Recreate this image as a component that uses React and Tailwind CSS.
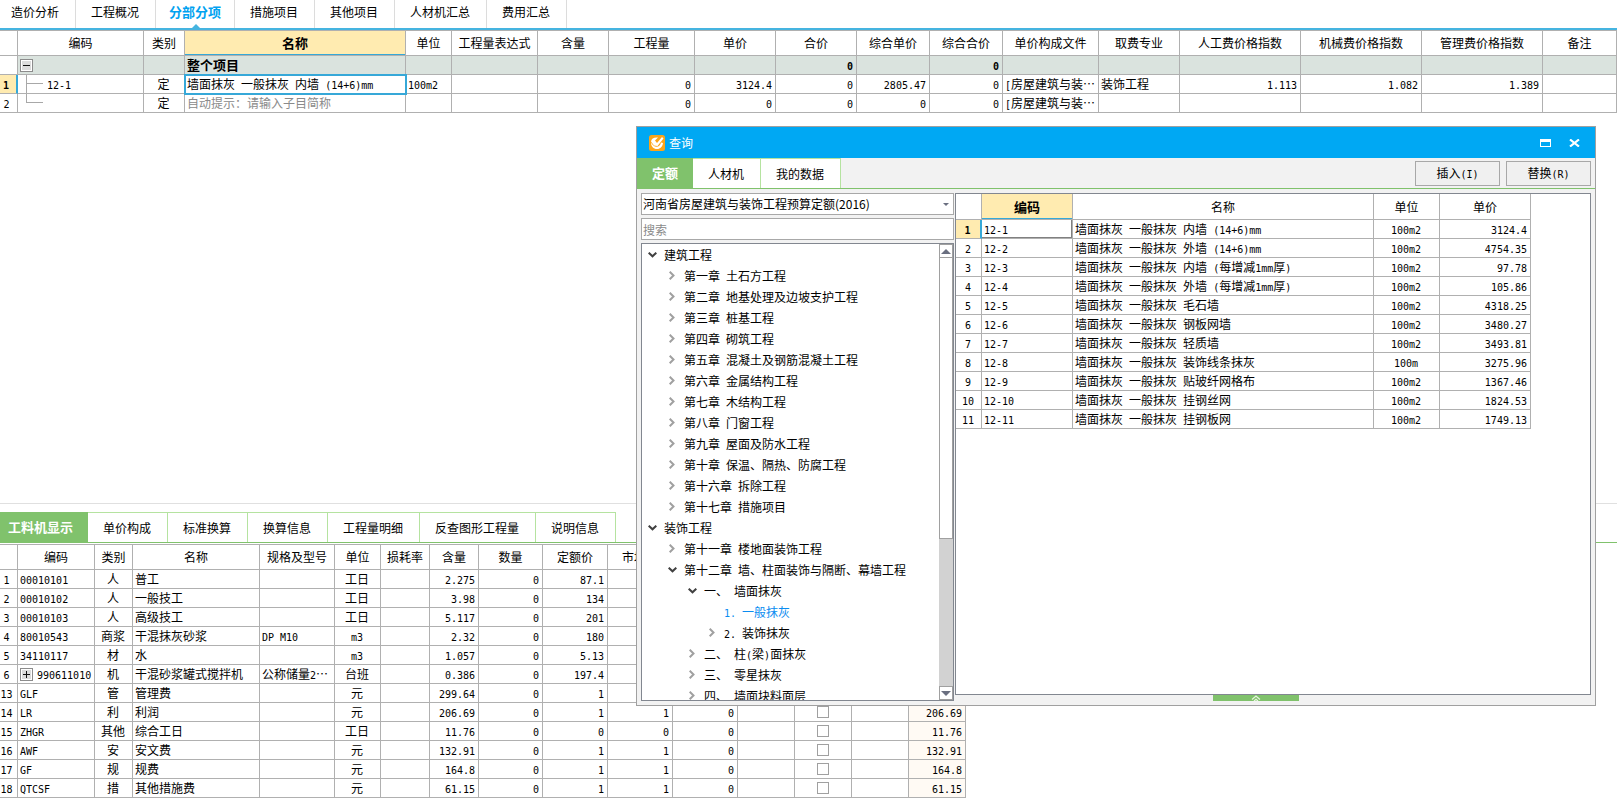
import { Fragment, useState } from "react";

const mainTabs = ["造价分析", "工程概况", "分部分项", "措施项目", "其他项目", "人材机汇总", "费用汇总"];
const detailTabs = ["工料机显示", "单价构成", "标准换算", "换算信息", "工程量明细", "反查图形工程量", "说明信息"];
const queryTabs = ["定额", "人材机", "我的数据"];

const itemCols = [
  { w: "w-[18px]", label: "" },
  { w: "w-[126px]", label: "编码" },
  { w: "w-[41px]", label: "类别" },
  { w: "w-[221px]", label: "名称" },
  { w: "w-[46px]", label: "单位" },
  { w: "w-[86px]", label: "工程量表达式" },
  { w: "w-[71px]", label: "含量" },
  { w: "w-[86px]", label: "工程量" },
  { w: "w-[81px]", label: "单价" },
  { w: "w-[81px]", label: "合价" },
  { w: "w-[73px]", label: "综合单价" },
  { w: "w-[73px]", label: "综合合价" },
  { w: "w-[96px]", label: "单价构成文件" },
  { w: "w-[81px]", label: "取费专业" },
  { w: "w-[121px]", label: "人工费价格指数" },
  { w: "w-[121px]", label: "机械费价格指数" },
  { w: "w-[121px]", label: "管理费价格指数" },
  { w: "", label: "备注" },
];

const detailCols = [
  { w: "w-[18px]", label: "" },
  { w: "w-[77px]", label: "编码" },
  { w: "w-[38px]", label: "类别" },
  { w: "w-[127px]", label: "名称" },
  { w: "w-[75px]", label: "规格及型号" },
  { w: "w-[46px]", label: "单位" },
  { w: "w-[49px]", label: "损耗率" },
  { w: "w-[49px]", label: "含量" },
  { w: "w-[64px]", label: "数量" },
  { w: "w-[65px]", label: "定额价" },
  { w: "w-[65px]", label: "市场价" },
  { w: "w-[65px]", label: "" },
  { w: "w-[57px]", label: "" },
  { w: "w-[57px]", label: "" },
  { w: "w-[57px]", label: "" },
  { w: "w-[57px]", label: "" },
];

const resources = [
  { no: 1, code: "00010101", kind: "人", name: "普工", unit: "工日", amount: "2.275", price: "87.1" },
  { no: 2, code: "00010102", kind: "人", name: "一般技工", unit: "工日", amount: "3.98", price: "134" },
  { no: 3, code: "00010103", kind: "人", name: "高级技工", unit: "工日", amount: "5.117", price: "201" },
  { no: 4, code: "80010543", kind: "商浆", name: "干混抹灰砂浆", spec: "DP M10", unit: "m3", amount: "2.32", price: "180" },
  { no: 5, code: "34110117", kind: "材", name: "水", unit: "m3", amount: "1.057", price: "5.13" },
  { no: 6, code: "990611010", kind: "机", name: "干混砂浆罐式搅拌机", spec: "公称储量2…", unit: "台班", amount: "0.386", price: "197.4", group: true },
  { no: 13, code: "GLF", kind: "管", name: "管理费", unit: "元", amount: "299.64", price: "1" },
  { no: 14, code: "LR", kind: "利", name: "利润", unit: "元", amount: "206.69", price: "1", market: "1", total: "206.69" },
  { no: 15, code: "ZHGR", kind: "其他", name: "综合工日", unit: "工日", amount: "11.76", price: "0", market: "0", total: "11.76" },
  { no: 16, code: "AWF", kind: "安", name: "安文费", unit: "元", amount: "132.91", price: "1", market: "1", total: "132.91" },
  { no: 17, code: "GF", kind: "规", name: "规费", unit: "元", amount: "164.8", price: "1", market: "1", total: "164.8" },
  { no: 18, code: "QTCSF", kind: "措", name: "其他措施费", unit: "元", amount: "61.15", price: "1", market: "1", total: "61.15" },
];

const tree = [
  { level: 0, open: true, label: "建筑工程" },
  { level: 1, label: "第一章 土石方工程" },
  { level: 1, label: "第二章 地基处理及边坡支护工程" },
  { level: 1, label: "第三章 桩基工程" },
  { level: 1, label: "第四章 砌筑工程" },
  { level: 1, label: "第五章 混凝土及钢筋混凝土工程" },
  { level: 1, label: "第六章 金属结构工程" },
  { level: 1, label: "第七章 木结构工程" },
  { level: 1, label: "第八章 门窗工程" },
  { level: 1, label: "第九章 屋面及防水工程" },
  { level: 1, label: "第十章 保温、隔热、防腐工程" },
  { level: 1, label: "第十六章 拆除工程" },
  { level: 1, label: "第十七章 措施项目" },
  { level: 0, open: true, label: "装饰工程" },
  { level: 1, label: "第十一章 楼地面装饰工程" },
  { level: 1, open: true, label: "第十二章 墙、柱面装饰与隔断、幕墙工程" },
  { level: 2, open: true, label: "一、 墙面抹灰" },
  { level: 3, leaf: true, label: "1. 一般抹灰" },
  { level: 3, label: "2. 装饰抹灰" },
  { level: 2, label: "二、 柱(梁)面抹灰" },
  { level: 2, label: "三、 零星抹灰" },
  { level: 2, label: "四、 墙面块料面层" },
];

const indent = ["pl-0", "pl-5", "pl-10", "pl-15"];

const quotas = [
  ["12-1", "墙面抹灰 一般抹灰 内墙 (14+6)mm", "100m2", "3124.4"],
  ["12-2", "墙面抹灰 一般抹灰 外墙 (14+6)mm", "100m2", "4754.35"],
  ["12-3", "墙面抹灰 一般抹灰 内墙 (每增减1mm厚)", "100m2", "97.78"],
  ["12-4", "墙面抹灰 一般抹灰 外墙 (每增减1mm厚)", "100m2", "105.86"],
  ["12-5", "墙面抹灰 一般抹灰 毛石墙", "100m2", "4318.25"],
  ["12-6", "墙面抹灰 一般抹灰 钢板网墙", "100m2", "3480.27"],
  ["12-7", "墙面抹灰 一般抹灰 轻质墙", "100m2", "3493.81"],
  ["12-8", "墙面抹灰 一般抹灰 装饰线条抹灰", "100m", "3275.96"],
  ["12-9", "墙面抹灰 一般抹灰 贴玻纤网格布", "100m2", "1367.46"],
  ["12-10", "墙面抹灰 一般抹灰 挂钢丝网", "100m2", "1824.53"],
  ["12-11", "墙面抹灰 一般抹灰 挂钢板网", "100m2", "1749.13"],
];

// Latin runs are half the width of a Chinese character
const Txt = ({ children }) =>
  String(children ?? "")
    .split(/([\x20-\x7e]+)/)
    .map((part, i) =>
      i % 2 ? (
        <span key={i} className="whitespace-pre font-['DejaVu_Sans_Mono',monospace] text-[10px] leading-none">
          {part}
        </span>
      ) : (
        <Fragment key={i}>{part}</Fragment>
      )
    );

const Th = ({ className = "", children }) => (
  <th
    scope="col"
    className={`overflow-hidden border-r border-b border-[#b0b0b0] p-0 text-center whitespace-nowrap ${className || "font-normal"}`}
  >
    {children}
  </th>
);

const Td = ({ className = "", pad = "pr-[3px] pl-0.5", children }) => (
  <td className={`h-[19px] overflow-hidden border-r border-b border-[#b0b0b0] py-0 whitespace-nowrap ${pad} ${className}`}>
    {typeof children === "string" || typeof children === "number" ? <Txt>{children}</Txt> : children}
  </td>
);

const Expander = ({ plus }) => (
  <button type="button" aria-label={plus ? "展开" : "折叠"} className="block size-[13px] shrink-0">
    <svg viewBox="0 0 13 13" className="size-[13px]" shapeRendering="crispEdges">
      <rect x="0.5" y="0.5" width="12" height="12" fill="#fff" stroke="#8c8c8c" />
      <rect x="2" y="2" width="9" height="9" fill="#dcdcdc" />
      <path d={plus ? "M3 6.5h7M6.5 3v7" : "M3 6.5h7"} stroke="#111" />
    </svg>
  </button>
);

const Chevron = ({ open }) =>
  open ? (
    <svg viewBox="0 0 9 6" className="h-1.5 w-[9px]" fill="none" stroke="#404040" strokeWidth="2">
      <path d="M0.7 0.7 4.5 4.3 8.3 0.7" />
    </svg>
  ) : (
    <svg viewBox="0 0 6 9" className="h-[9px] w-1.5" fill="none" stroke="#a0a0a0" strokeWidth="2">
      <path d="M0.7 0.7 4.5 4.5 0.7 8.3" />
    </svg>
  );

const ItemTable = () => (
  <table className="w-full table-fixed border-separate border-spacing-0 border-t border-[#b0b0b0]">
    <colgroup>
      {itemCols.map((c, i) => (
        <col key={i} className={c.w} />
      ))}
    </colgroup>
    <thead>
      <tr className="h-[25px]">
        {itemCols.map((c, i) =>
          c.label === "名称" ? (
            <Th key={i} className="bg-[#ffebb0] text-[13px] font-bold shadow-[inset_0_-1px_0_#36a8d8]">
              {c.label}
            </Th>
          ) : (
            <Th key={i}>{c.label}</Th>
          )
        )}
      </tr>
    </thead>
    <tbody>
      <tr className="bg-[#dae3de] font-bold">
        <Td className="bg-white" />
        <Td>
          <Expander />
        </Td>
        <Td />
        <Td className="text-[13px]">整个项目</Td>
        {itemCols.slice(4).map((c, i) => (
          <Td key={i} className="text-right">
            {c.label === "合价" || c.label === "综合合价" ? "0" : ""}
          </Td>
        ))}
      </tr>
      <tr>
        <Td pad="pr-1" className="border-r-2 border-r-[#36a8d8] bg-[#ffebb0] text-center font-bold">
          1
        </Td>
        <Td>
          <div className="flex h-[18px] items-center pl-[6px]">
            <svg viewBox="0 0 17 18" className="h-[18px] w-[17px]" shapeRendering="crispEdges">
              <path d="M0.5 0v18M0 8.5h17" stroke="#a8a8a8" fill="none" />
            </svg>
            <span className="pl-1">
              <Txt>12-1</Txt>
            </span>
          </div>
        </Td>
        <Td className="text-center">定</Td>
        <Td className="outline-2 -outline-offset-1 outline-[#36a8d8]">墙面抹灰 一般抹灰 内墙 (14+6)mm</Td>
        <Td>100m2</Td>
        <Td />
        <Td />
        <Td className="text-right">0</Td>
        <Td className="text-right">3124.4</Td>
        <Td className="text-right">0</Td>
        <Td className="text-right">2805.47</Td>
        <Td className="text-right">0</Td>
        <Td>[房屋建筑与装…</Td>
        <Td>装饰工程</Td>
        <Td className="text-right">1.113</Td>
        <Td className="text-right">1.082</Td>
        <Td className="text-right">1.389</Td>
        <Td />
      </tr>
      <tr>
        <Td pad="pr-1" className="text-center">
          2
        </Td>
        <Td>
          <div className="flex h-[18px] pl-[6px]">
            <svg viewBox="0 0 17 18" className="h-[18px] w-[17px]" shapeRendering="crispEdges">
              <path d="M0.5 0v8.5H17" stroke="#a8a8a8" fill="none" />
            </svg>
          </div>
        </Td>
        <Td className="text-center">定</Td>
        <Td className="text-[#8a8a8a]">自动提示：请输入子目简称</Td>
        <Td />
        <Td />
        <Td />
        <Td className="text-right">0</Td>
        <Td className="text-right">0</Td>
        <Td className="text-right">0</Td>
        <Td className="text-right">0</Td>
        <Td className="text-right">0</Td>
        <Td>[房屋建筑与装…</Td>
        <Td />
        <Td />
        <Td />
        <Td />
        <Td />
      </tr>
    </tbody>
  </table>
);

const DetailTable = () => (
  <table className="w-[966px] table-fixed border-separate border-spacing-0 border-t border-[#b0b0b0]">
    <colgroup>
      {detailCols.map((c, i) => (
        <col key={i} className={c.w} />
      ))}
    </colgroup>
    <thead>
      <tr className="h-[25px]">
        {detailCols.map((c, i) => (
          <Th key={i}>{c.label}</Th>
        ))}
      </tr>
    </thead>
    <tbody>
      {resources.map((r) => (
        <tr key={r.no}>
          <Td pad="pr-1" className="text-center">
            {r.no}
          </Td>
          <Td>
            {r.group ? (
              <div className="flex h-[18px] items-center gap-1">
                <Expander plus />
                <span>
                  <Txt>{r.code}</Txt>
                </span>
              </div>
            ) : (
              r.code
            )}
          </Td>
          <Td className="text-center">{r.kind}</Td>
          <Td>{r.name}</Td>
          <Td>{r.spec}</Td>
          <Td className="text-center">{r.unit}</Td>
          <Td />
          <Td className="text-right">{r.amount}</Td>
          <Td className="text-right">0</Td>
          <Td className="text-right">{r.price}</Td>
          <Td className="text-right">{r.market}</Td>
          <Td className="text-right">{r.total ? "0" : ""}</Td>
          <Td />
          <Td className="text-center">
            {r.total && (
              <input
                type="checkbox"
                aria-label={r.name}
                className="mx-auto block size-3 appearance-none border border-[#a0a0a0] bg-white"
              />
            )}
          </Td>
          <Td />
          <Td className="bg-[#fffaf4] text-right">{r.total}</Td>
        </tr>
      ))}
    </tbody>
  </table>
);

const QueryTree = () => (
  <div className="flex min-h-0 flex-1 border border-[#828790] bg-white">
    <ul className="flex-1 overflow-hidden">
      {tree.map((node) => (
        <li key={node.label} className={`flex h-[21px] items-center ${indent[node.level]}`}>
          <span className="flex w-5 justify-center">{!node.leaf && <Chevron open={node.open} />}</span>
          <span className={`pl-0.5 whitespace-nowrap ${node.leaf ? "text-[#0a8cf0]" : ""}`}>
            <Txt>{node.label}</Txt>
          </span>
        </li>
      ))}
    </ul>
    <div className="flex w-3.5 flex-col bg-[#d2d2d2]">
      <button type="button" aria-label="向上" className="flex h-3.5 items-center justify-center border border-[#a0a0a0] bg-white">
        <svg viewBox="0 0 10 5" className="h-[5px] w-2.5" fill="#6a6f80">
          <path d="M5 0l5 5H0z" />
        </svg>
      </button>
      <div className="h-[281px] border border-t-0 border-[#a0a0a0] bg-white" />
      <button type="button" aria-label="向下" className="mt-auto flex h-3.5 items-center justify-center border border-[#a0a0a0] bg-white">
        <svg viewBox="0 0 10 5" className="h-[5px] w-2.5" fill="#6a6f80">
          <path d="M0 0h10L5 5z" />
        </svg>
      </button>
    </div>
  </div>
);

const QuotaTable = () => (
  <table className="w-[575px] table-fixed border-separate border-spacing-0">
    <colgroup>
      <col className="w-[26px]" />
      <col className="w-[91px]" />
      <col className="w-[301px]" />
      <col className="w-[66px]" />
      <col className="w-[91px]" />
    </colgroup>
    <thead>
      <tr className="h-[26px]">
        <Th />
        <Th className="bg-[#ffebb0] text-[13px] font-bold shadow-[inset_0_-1px_0_#36a8d8]">编码</Th>
        <Th>名称</Th>
        <Th>单位</Th>
        <Th>单价</Th>
      </tr>
    </thead>
    <tbody>
      {quotas.map(([code, name, unit, price], i) => (
        <tr key={code}>
          <Td className={i === 0 ? "border-r-2 border-r-[#36a8d8] bg-[#ffebb0] text-center font-bold" : "text-center"}>{i + 1}</Td>
          <Td className={i === 0 ? "border-[#808080] shadow-[inset_-1px_-1px_0_#808080]" : ""}>{code}</Td>
          <Td>{name}</Td>
          <Td className="text-center">{unit}</Td>
          <Td className="text-right">{price}</Td>
        </tr>
      ))}
    </tbody>
  </table>
);

const QueryDialog = () => {
  const [tab, setTab] = useState("定额");

  return (
    <section
      role="dialog"
      aria-label="查询"
      className="absolute top-[126px] right-[21px] flex h-[580px] w-[960px] flex-col border border-[#a0a0a0] bg-[#f2f2f2]"
    >
      <header className="flex h-[31px] shrink-0 items-center bg-[#00a8f3] pr-[15px] pl-3 text-white">
        <svg viewBox="0 0 16 16" className="size-4">
          <rect width="16" height="16" rx="2.5" fill="#fba51a" />
          <path d="M2 6.5C2.5 3.500 5 2 9 2.500L6 5.500 8 8l5-6 1.500 1.500L8.500 11 5 10.500z" fill="#fff" />
          <path d="M2 7.500c0 4 2.500 6.500 6 6.500s5.500-2.500 6-6l-2-0.500C11.500 10 10 11.800 7.500 11.800 5 11.800 3.500 10 2 7.500z" fill="#fff" />
        </svg>
        <h2 className="pl-1">查询</h2>
        <button type="button" aria-label="最大化" className="ml-auto">
          <svg viewBox="0 0 11 8" className="h-2 w-[11px]" shapeRendering="crispEdges">
            <path d="M0 0h11v8H0zM1 3v4h9V3z" fill="#fff" fillRule="evenodd" />
          </svg>
        </button>
        <button type="button" aria-label="关闭" className="ml-[18px]">
          <svg viewBox="0 0 11 8" className="h-2 w-[11px]" fill="none" stroke="#fff" strokeWidth="2.2">
            <path d="M1 0.5 10 7.5M10 0.5 1 7.5" />
          </svg>
        </button>
      </header>

      <div className="flex h-[31px] shrink-0 items-center border-b border-[#80c26c] pr-1">
        <div role="tablist" className="flex h-[30px]">
          {queryTabs.map((t) => (
            <button
              key={t}
              type="button"
              role="tab"
              aria-selected={t === tab}
              onClick={() => setTab(t)}
              className={
                t === tab
                  ? "bg-[#80c26c] px-[15px] text-[13px] font-bold text-white"
                  : "border-t border-r border-[#b5e3a0] bg-white pr-4 pl-[15px]"
              }
            >
              {t}
            </button>
          ))}
        </div>
        <div className="ml-auto flex gap-1.5">
          <button type="button" className="h-[25px] w-[85px] border border-[#a8a8a8] bg-[#f0f0f0]">
            <Txt>插入(I)</Txt>
          </button>
          <button type="button" className="h-[25px] w-[85px] border border-[#a8a8a8] bg-[#f0f0f0]">
            <Txt>替换(R)</Txt>
          </button>
        </div>
      </div>

      <div className="flex min-h-0 flex-1 gap-px p-1">
        <div className="flex w-[313px] flex-col gap-[3px]">
          <div className="relative">
            <select aria-label="定额库" className="block h-[22px] w-full appearance-none border border-[#a8a8a8] bg-white pl-px">
              <option>河南省房屋建筑与装饰工程预算定额(2016)</option>
            </select>
            <svg viewBox="0 0 6 3" className="absolute top-[10px] right-[5px] h-[3px] w-1.5" fill="#6a6f80">
              <path d="M0 0h6L3 3z" />
            </svg>
          </div>
          <input
            type="text"
            aria-label="搜索"
            placeholder="搜索"
            className="block h-[22px] w-full border border-[#a8a8a8] bg-white pl-px placeholder:text-[#8a8a8a]"
          />
          <QueryTree />
        </div>
        <div className="flex flex-1 flex-col">
          <div className="flex-1 border border-[#828790] bg-white">
            <QuotaTable />
          </div>
          <button type="button" aria-label="收起" className="ml-[258px] flex h-1.5 w-[86px] justify-center bg-[#80c26c]">
            <svg viewBox="0 0 10 6" className="h-1.5 w-2.5" fill="none" stroke="#e6f5df" strokeWidth="1.2">
              <path d="M1 4.5 5 1l4 3.5M3 6l2-1.8L7 6" />
            </svg>
          </button>
        </div>
      </div>
    </section>
  );
};

export default function App() {
  const [tab, setTab] = useState("分部分项");
  const [detailTab, setDetailTab] = useState("工料机显示");

  return (
    <div className="relative flex min-h-screen flex-col overflow-hidden bg-white font-['Noto_Sans_CJK_SC',sans-serif] text-xs leading-4 text-black">
      <nav role="tablist" className="flex h-[30px] border-b-2 border-[#45b4e0]">
        {mainTabs.map((t) => (
          <button
            key={t}
            type="button"
            role="tab"
            aria-selected={t === tab}
            onClick={() => setTab(t)}
            className={`relative border-r border-[#dcdcdc] pb-1 ${
              t === tab ? "px-[13px] text-[13px] font-bold text-[#00a2f0]" : "pr-4 pl-[15px] first:pl-[11px]"
            }`}
          >
            {t}
            {t === tab && (
              <svg viewBox="0 0 8 4" className="absolute bottom-0 left-9 h-1 w-2" fill="#45b4e0">
                <path d="M4 0l4 4H0z" />
              </svg>
            )}
          </button>
        ))}
      </nav>

      <main className="flex-1">
        <ItemTable />
      </main>

      <section className="border-t border-[#e0e0e0] pt-2 pb-2">
        <div role="tablist" className="mb-px flex h-[31px] border-b border-[#80c26c]">
          {detailTabs.map((t) => (
            <button
              key={t}
              type="button"
              role="tab"
              aria-selected={t === detailTab}
              onClick={() => setDetailTab(t)}
              className={
                t === detailTab
                  ? "bg-[#80c26c] pr-[15px] pl-2 text-[13px] font-bold text-white"
                  : "border-t border-r border-[#b5e3a0] pr-4 pl-[15px]"
              }
            >
              {t}
            </button>
          ))}
        </div>
        <DetailTable />
      </section>

      <QueryDialog />
    </div>
  );
}
